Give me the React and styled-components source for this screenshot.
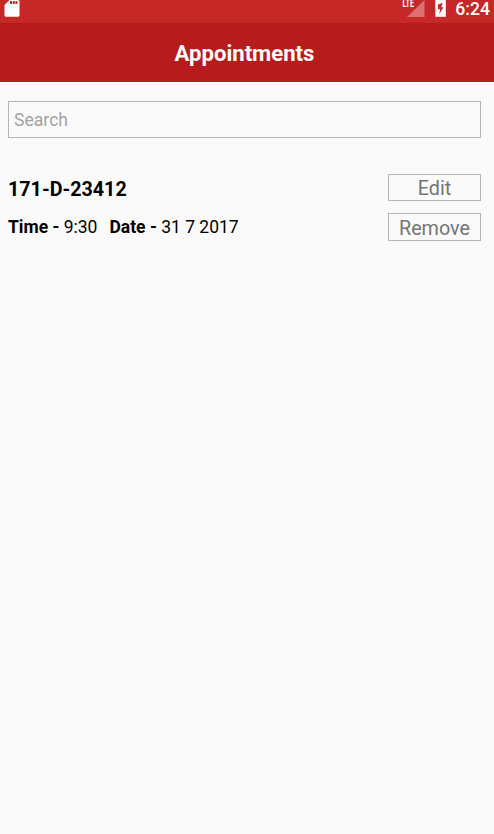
import React from "react";
import styled, { createGlobalStyle } from "styled-components";

const GlobalStyle = createGlobalStyle`
  * { box-sizing: border-box; }
  body { margin: 0; background: #fafafa; font-family: Roboto, "Noto Sans", sans-serif; }
`;

const Screen = styled.div`
  height: 834px;
  overflow: hidden;
  background: #fafafa;
  color: #000;
`;

const StatusBar = styled.div`
  display: flex;
  height: 23px;
  padding: 0 4px;
  background: #c62828;
  color: #fff;
`;

const StatusIcon = styled.svg`
  display: block;
  flex: none;
  overflow: visible;
  margin-left: ${(p) => p.$gap || 0}px;
`;

const Spacer = styled.div`
  flex: 1;
`;

const LteLabel = styled.text`
  font: 700 10px Roboto, sans-serif;
  fill: #fff;
`;

const Clock = styled.span`
  margin-left: 9px;
  font-size: 17.6px;
  font-weight: 500;
  line-height: 18px;
  white-space: nowrap;
`;

const Header = styled.header`
  display: flex;
  align-items: center;
  justify-content: center;
  height: 59px;
  padding: 0 5px 0 0;
  background: #b71c1c;
`;

const Title = styled.h1`
  margin: 0;
  color: #fff;
  font-size: 22.1px;
  font-weight: 700;
  line-height: 28px;
`;

const Content = styled.main`
  padding: 19px 13px 0 8px;
`;

const SearchInput = styled.input`
  display: block;
  width: 100%;
  height: 37px;
  padding: 1px 5px 0;
  border: 1px solid #b5b5b5;
  border-radius: 0;
  outline: 0;
  background: transparent;
  font: 400 17.6px Roboto, sans-serif;
  &::placeholder { color: #a3a3a3; opacity: 1; }
`;

const Appointment = styled.section`
  display: flex;
  justify-content: space-between;
  margin-top: 36px;
`;

const Code = styled.h2`
  margin: 4px 0 0;
  font-size: 19.7px;
  font-weight: 700;
  line-height: 24px;
`;

const Details = styled.div`
  display: flex;
  gap: 12px;
  margin-top: 14px;
  font-size: 17.5px;
  line-height: 22px;
  white-space: nowrap;
`;

const Actions = styled.div`
  display: flex;
  flex-direction: column;
  gap: 12px;
  width: 93px;
`;

const Button = styled.button`
  height: ${(p) => p.$height}px;
  padding: 3px 0 0;
  border: 1px solid #b5b5b5;
  background: transparent;
  color: #757575;
  font: 400 19.8px/22px Roboto, sans-serif;
`;

export default function App() {
  return (
    <Screen>
      <GlobalStyle />
      <StatusBar>
        <StatusIcon width="16" height="18" viewBox="0 0 16 18">
          <path d="M5.5 0H14a1.5 1.5 0 0 1 1.5 1.5v13.8a1.5 1.5 0 0 1-1.5 1.5H2a1.5 1.5 0 0 1-1.5-1.5V5Z" fill="#fff" />
          <path d="M6 1h2v3H6ZM8.7 1h2v3h-2ZM11.4 1h2v3h-2Z" fill="#c62828" />
        </StatusIcon>
        <Spacer />
        <StatusIcon width="24" height="18" viewBox="0 0 24 18">
          <path d="M22.5 0v17H5Z" fill="#dc7070" />
          <path d="M0 0h13v8.5H0Z" fill="#c62828" />
          <LteLabel x="0.5" y="7.3" textLength="11.5" lengthAdjust="spacingAndGlyphs">LTE</LteLabel>
        </StatusIcon>
        <StatusIcon $gap={9} width="11" height="18" viewBox="0 0 11 18">
          <path d="M0.3 0h10.5v16.8H0.3Z" fill="#fff" />
          <path d="M7.6 2.8 2.8 4.8 3 9.3h2.2L4.2 14.2 8.5 7.2H6.3Z" fill="#c62828" />
        </StatusIcon>
        <Clock>6:24</Clock>
      </StatusBar>
      <Header><Title>Appointments</Title></Header>
      <Content>
        <SearchInput placeholder="Search" aria-label="Search" />
        <Appointment>
          <div>
            <Code>171-D-23412</Code>
            <Details>
              <span><b>Time - </b>9:30</span>
              <span><b>Date - </b>31 7 2017</span>
            </Details>
          </div>
          <Actions>
            <Button $height={27}>Edit</Button>
            <Button $height={28}>Remove</Button>
          </Actions>
        </Appointment>
      </Content>
    </Screen>
  );
}
